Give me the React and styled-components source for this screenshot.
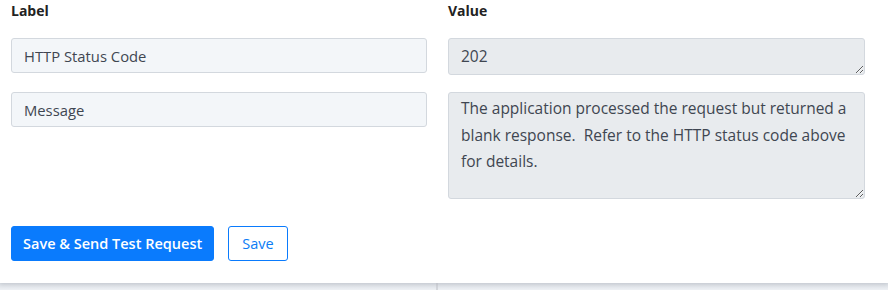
import React from 'react'
import styled, { createGlobalStyle } from 'styled-components'

const GlobalStyle = createGlobalStyle`
  html, body {
    margin: 0;
    padding: 0;
    background: #eef1f5;
    font-family: "Open Sans", "Noto Sans", sans-serif;
  }
`

const Panel = styled.section`
  background: white;
  padding: 0 23px 22px 11px;
  box-shadow: 0 2px 4px rgba(40, 50, 70, 0.12);
  position: relative;
  z-index: 2;
`

const FieldGrid = styled.div`
  display: grid;
  grid-template-columns: 416px 1fr;
  column-gap: 21px;
  row-gap: 17px;
  align-items: start;
`

const ColumnHead = styled.div`
  font-size: 14px;
  font-weight: 700;
  line-height: 21px;
  color: #222;
`

const LabelInput = styled.input`
  box-sizing: border-box;
  width: 100%;
  height: 35px;
  margin: 0;
  padding: 0 12px;
  font-family: inherit;
  font-size: 14.8px;
  color: #3f4651;
  background: #f3f6f9;
  border: 1px solid #d3d8de;
  border-radius: 3px;
  outline: none;
`

const ValueArea = styled.textarea`
  box-sizing: border-box;
  display: block;
  width: 100%;
  height: ${p => p.$h}px;
  margin: 0;
  padding: ${p => p.$pad};
  font-family: inherit;
  font-size: 15.5px;
  line-height: 26.5px;
  color: #3f4651;
  background: #e8ebee;
  border: 1px solid #d3d8de;
  border-radius: 3px;
  outline: none;
  overflow: hidden;
  resize: vertical;
`

const ButtonRow = styled.div`
  display: flex;
  gap: 14px;
  margin-top: 27px;
`

const Button = styled.button`
  box-sizing: border-box;
  height: 35px;
  padding: 0 ${p => (p.$primary ? '11px' : '13px')};
  font-family: inherit;
  font-size: 14.5px;
  font-weight: ${p => (p.$primary ? 600 : 400)};
  color: ${p => (p.$primary ? 'white' : '#0b7cf5')};
  background: ${p => (p.$primary ? '#0a7bfd' : 'white')};
  border: 1px solid #0a7bfd;
  border-radius: 3px;
  cursor: pointer;
`

const Below = styled.div`
  display: grid;
  grid-template-columns: 438px 1fr;
  height: 7px;
  background: linear-gradient(#dde1e6, #edf0f4);
`

const Pane = styled.div`
  border-right: ${p => (p.$divided ? '2px solid #d3d6db' : 'none')};
`

export default function App() {
  return (
    <>
      <GlobalStyle />
      <Panel>
        <FieldGrid>
          <ColumnHead>Label</ColumnHead>
          <ColumnHead>Value</ColumnHead>
          <LabelInput readOnly value="HTTP Status Code" />
          <ValueArea readOnly $h={37} $pad="4px 12px" value="202" />
          <LabelInput readOnly value="Message" />
          <ValueArea
            readOnly
            $h={107}
            $pad="2px 12px"
            value="The application processed the request but returned a blank response.  Refer to the HTTP status code above for details."
          />
        </FieldGrid>
        <ButtonRow>
          <Button $primary>Save &amp; Send Test Request</Button>
          <Button>Save</Button>
        </ButtonRow>
      </Panel>
      <Below>
        <Pane $divided />
        <Pane />
      </Below>
    </>
  )
}
